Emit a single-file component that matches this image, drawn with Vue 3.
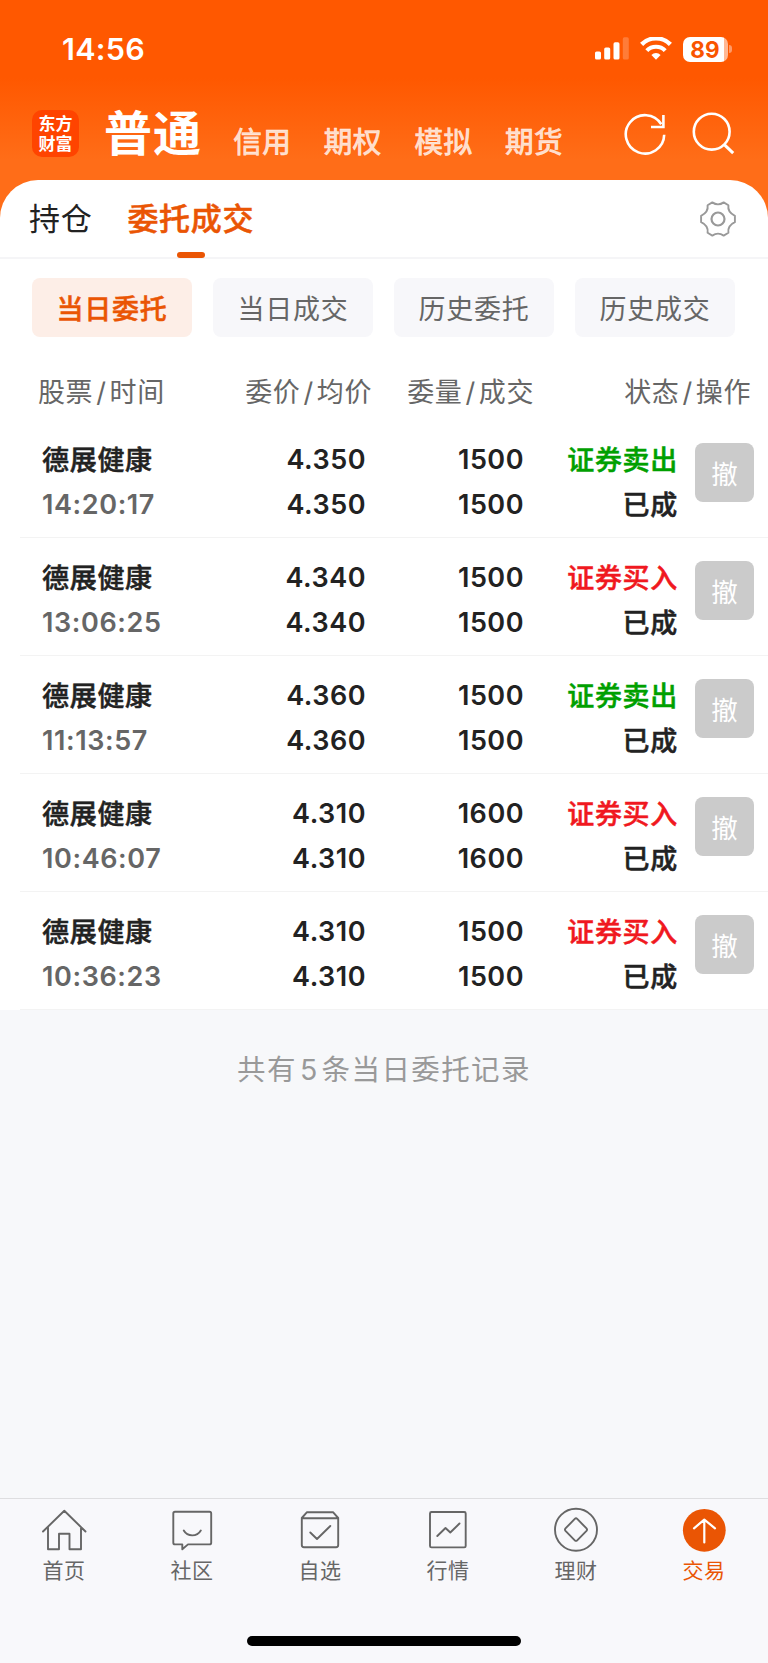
<template>
  <div class="trade-page">
    <header class="top">
      <div class="status-bar">
        <span class="clock">14:56</span>
        <div class="indicators">
          <svg class="signal" width="34" height="24" viewBox="0 0 34 24" fill="#fff">
            <rect x="0" y="14.5" width="6" height="8" rx="1.6" />
            <rect x="9.2" y="10.5" width="6" height="12" rx="1.6" />
            <rect x="18.5" y="5.3" width="6" height="17.2" rx="1.6" />
            <rect x="27.8" y="0.3" width="6" height="22.2" rx="1.6" opacity="0.22" />
          </svg>
          <svg class="wifi" width="32" height="24" viewBox="0 0 32 24" fill="none" stroke="#fff">
            <path d="M1.6 7.4A20.3 20.3 0 0 1 30.4 7.4" stroke-width="4.4" />
            <path d="M6.8 13.6A12.9 12.900 0 0 1 25.2 13.6" stroke-width="4.2" />
            <path d="M16 22.800L11.400 18A6.500 6.500 0 0 1 20.600 18Z" fill="#fff" stroke="none" />
          </svg>
          <div class="battery"><span>89</span></div>
          <i class="battery-cap"></i>
        </div>
      </div>
      <div class="account-bar">
        <div class="logo"><span>东方</span><span>财富</span></div>
        <strong class="account-current">普通</strong>
        <nav class="accounts">
          <span v-for="name in accounts" :key="name">{{ name }}</span>
        </nav>
        <svg class="refresh" width="44" height="44" viewBox="0 0 44 44" fill="none" stroke="#fff" stroke-width="2.6">
          <path d="M41.2 22.800A19.200 19.200 0 1 1 38.300 12.200" />
          <path d="M40.400 3V15H28" />
        </svg>
        <svg class="search" width="44" height="44" viewBox="0 0 44 44" fill="none" stroke="#fff" stroke-width="2.6">
          <circle cx="19.700" cy="19.700" r="17.900" />
          <path d="M32 32.300L41.200 41.200" stroke-width="3" />
        </svg>
      </div>
    </header>

    <main class="panel">
      <div class="tabs">
        <span class="tab">持仓</span>
        <span class="tab active">委托成交</span>
        <svg class="gear" width="40" height="40" viewBox="0 0 40 40" fill="none" stroke="#999" stroke-width="1.9" stroke-linejoin="round">
          <path d="M14.300 3.400L9.600 6.200C10.300 11 7.400 14.800 3.100 16.800V23.200C7.400 25.200 10.300 29 9.600 33.800L14.300 36.600C18 34 22 34 25.700 36.600L30.400 33.800C29.700 29 32.600 25.200 36.900 23.200V16.800C32.600 14.800 29.700 11 30.400 6.200L25.700 3.400C22 6 18 6 14.300 3.400Z" />
          <circle cx="20" cy="20" r="6.500" stroke-width="2.200" />
        </svg>
      </div>

      <div class="chips">
        <button v-for="(chip, i) in chips" :key="chip" class="chip" :class="{ active: i === 0 }" type="button">
          {{ chip }}
        </button>
      </div>

      <div class="row head">
        <span>股票<i>/</i>时间</span>
        <span>委价<i>/</i>均价</span>
        <span>委量<i>/</i>成交</span>
        <span>状态<i>/</i>操作</span>
      </div>

      <div v-for="order in orders" :key="order.time" class="row order">
        <div class="cell">
          <b class="cjk">德展健康</b>
          <span class="time">{{ order.time }}</span>
        </div>
        <div class="cell num">
          <b>{{ order.price }}</b>
          <b>{{ order.price }}</b>
        </div>
        <div class="cell num">
          <b>{{ order.qty }}</b>
          <b>{{ order.qty }}</b>
        </div>
        <div class="cell state">
          <b class="cjk" :class="order.side">{{ order.side === 'sell' ? '证券卖出' : '证券买入' }}</b>
          <b class="cjk">已成</b>
        </div>
        <button class="cancel" type="button">撤</button>
      </div>
    </main>

    <p class="summary">共有<i>5</i>条当日委托记录</p>

    <footer class="tabbar">
      <div class="tabbar-items">
        <div v-for="item in navItems" :key="item.label" class="nav-item" :class="{ active: item.active }">
          <svg width="48" height="48" viewBox="0 0 48 48" fill="none" stroke="#666" stroke-width="1.9" stroke-linecap="round" stroke-linejoin="round">
            <circle v-if="item.active" cx="24.300" cy="24.300" r="21.400" fill="#ea5504" stroke="none" />
            <circle v-if="item.ring" cx="24" cy="23.800" r="21" />
            <path :d="item.icon" :class="{ arrow: item.active }" />
          </svg>
          <span>{{ item.label }}</span>
        </div>
      </div>
      <div class="home-indicator"></div>
    </footer>
  </div>
</template>

<script setup>
const accounts = ['信用', '期权', '模拟', '期货']
const chips = ['当日委托', '当日成交', '历史委托', '历史成交']

const orders = [
  { time: '14:20:17', price: '4.350', qty: '1500', side: 'sell' },
  { time: '13:06:25', price: '4.340', qty: '1500', side: 'buy' },
  { time: '11:13:57', price: '4.360', qty: '1500', side: 'sell' },
  { time: '10:46:07', price: '4.310', qty: '1600', side: 'buy' },
  { time: '10:36:23', price: '4.310', qty: '1500', side: 'buy' }
]

const navItems = [
  { label: '首页', icon: 'M3 25.5L24.3 4.8L45.5 25.5M8 21V43.300H19V27.800H29.500V43.300H41V21' },
  { label: '社区', icon: 'M7 5.7H41.5Q43.2 5.700 43.200 7.400V36.700Q43.200 38.400 41.500 38.400H20L14.300 43.300V38.400H7Q5.300 38.400 5.300 36.700V7.400Q5.300 5.700 7 5.700ZM15.800 24.500C19.500 31 29 31 32.800 24.500' },
  { label: '自选', icon: 'M11 6.2H37L42.2 12V39Q42.200 41.200 40 41.200H8Q5.800 41.200 5.800 39V12L11 6.200ZM6 12.300H42M14.300 26.500L21 33L34.300 20' },
  { label: '行情', icon: 'M7.5 6H40.3Q41.7 6 41.700 7.400V40Q41.700 41.400 40.300 41.400H7.500Q6 41.400 6 40V7.400Q6 6 7.500 6ZM13.300 30L21.500 22L26.300 26.500L35.500 17.500' },
  { label: '理财', ring: true, icon: 'M22.8 12.9Q24 11.7 25.2 12.900L34.500 22.400Q35.600 23.600 34.500 24.800L25.200 34.300Q24 35.500 22.800 34.300L13.500 24.800Q12.400 23.600 13.500 22.400Z' },
  { label: '交易', active: true, icon: 'M24.3 36.5V14M14 22.3L24.3 13.6L35 22.3' }
]
</script>

<style>
body {
  background: #f7f8fa;
}
</style>

<style scoped>
.trade-page {
  display: flex;
  flex-direction: column;
  width: 768px;
  height: 1663px;
  overflow: hidden;
  background: #f7f8fa;
  color: #222;
  font-family: Inter, 'Noto Sans CJK SC', sans-serif;
}

.top {
  flex: none;
  height: 222px;
  background: linear-gradient(180deg, #ff5800 0, #ff5800 78px, #ff6d18 160px, #ff6d18 100%);
}

.status-bar {
  display: flex;
  justify-content: space-between;
  align-items: center;
  height: 98px;
  padding: 0 36px 0 62px;
  box-sizing: border-box;
}

.clock {
  font-size: 30.5px;
  font-weight: 600;
  line-height: 36px;
  letter-spacing: 0.3px;
  color: #fff;
}

.indicators {
  display: flex;
  align-items: center;
}

.wifi {
  margin-left: 11px;
}

.battery {
  width: 45px;
  height: 25px;
  margin-left: 11px;
  border-radius: 7px;
  background: linear-gradient(90deg, #fff 41px, #ffb894 41px);
  color: #f95500;
  font-size: 22.5px;
  font-weight: 700;
  line-height: 25px;
  text-align: center;
}

.battery span {
  margin-right: 1px;
}

.battery-cap {
  width: 3px;
  height: 8px;
  margin-left: 1px;
  border-radius: 0 4px 4px 0;
  background: #ff9a68;
}

.account-bar {
  display: flex;
  height: 82px;
  padding-left: 32px;
}

.logo {
  display: flex;
  flex-direction: column;
  justify-content: center;
  width: 47px;
  height: 47px;
  margin-top: 12px;
  padding-bottom: 2px;
  border-radius: 10px;
  background: #ff4400;
  color: #fff;
  font-family: 'Noto Sans CJK SC', sans-serif;
  font-size: 17px;
  font-weight: 700;
  line-height: 20px;
  text-align: center;
  box-sizing: border-box;
}

.account-current {
  width: 98px;
  margin: 6px 0 0 25px;
  color: #fff;
  font-size: 48px;
  font-weight: 700;
  line-height: 60px;
  letter-spacing: 1px;
}

.accounts {
  display: flex;
  width: 390px;
  margin: 23px 0 0 31px;
  color: rgba(255, 255, 255, 0.8);
  font-size: 29px;
  font-weight: 500;
  line-height: 43px;
  -webkit-text-stroke: 0.3px;
}

.accounts span {
  width: 90.6px;
}

.refresh,
.search {
  flex: none;
  margin-top: 14px;
}

.search {
  margin-left: 25px;
}

.panel {
  flex: none;
  height: 830px;
  margin-top: -42px;
  border-radius: 38px 38px 0 0;
  background: #fff;
}

.tabs {
  display: flex;
  height: 79px;
  padding: 0 29px;
  border-bottom: 2px solid #f5f5f7;
  box-sizing: border-box;
}

.tab {
  position: relative;
  height: 79px;
  margin-right: 35px;
  font-size: 31px;
  line-height: 77px;
  letter-spacing: 0.7px;
}

.tab.active {
  color: #ea5504;
  font-weight: 500;
  -webkit-text-stroke: 0.5px;
}

.tab.active::after {
  position: absolute;
  bottom: 1px;
  left: 50%;
  width: 28px;
  height: 6px;
  margin-left: -14px;
  border-radius: 3px;
  background: #ea5504;
  content: '';
}

.gear {
  margin: 19px 1px 0 auto;
}

.chips {
  display: flex;
  gap: 21px;
  padding: 19px 33px 0 32px;
}

.chip {
  flex: 1;
  height: 59px;
  padding: 0;
  border: 0;
  border-radius: 8px;
  background: #f7f7fa;
  color: #666;
  font: 400 27px/57px 'Noto Sans CJK SC', sans-serif;
  letter-spacing: 0.7px;
}

.chip.active {
  background: #fdeee7;
  color: #ea5504;
  font-weight: 500;
  -webkit-text-stroke: 0.5px;
}

.row {
  display: grid;
  grid-template-columns: 180px 144px 158px 154px 79px;
}

.head {
  grid-template-columns: 180px 154px 162px 217px;
  height: 83px;
  padding: 36px 0 0 38px;
  box-sizing: border-box;
  color: #666;
  font-size: 27px;
  line-height: 40px;
  letter-spacing: 0.6px;
}

.head span + span {
  text-align: right;
}

.head i {
  padding: 0 3px;
  font-style: normal;
}

.order {
  height: 118px;
  margin-left: 20px;
  padding-left: 22px;
  border-bottom: 1px solid #f3f3f3;
  box-sizing: border-box;
}

.cell {
  display: flex;
  flex-direction: column;
  padding-top: 17px;
  font-size: 27px;
  line-height: 45px;
  letter-spacing: 0.5px;
  white-space: nowrap;
}

.cell b {
  font-weight: 600;
}

.cell .cjk {
  margin-top: -1px;
  margin-bottom: 1px;
  font-family: 'Noto Sans CJK SC', sans-serif;
  font-weight: 500;
  letter-spacing: 0.7px;
  -webkit-text-stroke: 0.5px;
}

.time {
  color: #666;
  font-weight: 600;
  letter-spacing: 0.6px;
}

.num,
.state {
  text-align: right;
}

.cell .sell {
  color: #00a000;
}

.cell .buy {
  color: #f01820;
}

.cancel {
  width: 59px;
  height: 59px;
  margin: 23px 0 0 17px;
  padding: 0;
  border: 0;
  border-radius: 8px;
  background: #cbcbcb;
  color: #fff;
  font: 400 26.5px/57px 'Noto Sans CJK SC', sans-serif;
}

.summary {
  margin: 39px 0 0;
  color: #999;
  font-size: 28.5px;
  line-height: 42px;
  letter-spacing: 1.4px;
  text-align: center;
}

.summary i {
  padding: 0 3px;
  font-style: normal;
}

.tabbar {
  display: flex;
  flex-direction: column;
  justify-content: space-between;
  align-items: center;
  height: 165px;
  margin-top: auto;
  padding-bottom: 17px;
  border-top: 1px solid #dedee0;
  background: #f8f8fb;
  box-sizing: border-box;
}

.tabbar-items {
  display: flex;
}

.nav-item {
  display: flex;
  flex-direction: column;
  align-items: center;
  width: 128px;
  padding-top: 7px;
  color: #666;
  font-size: 21px;
  line-height: 34px;
  letter-spacing: 0.6px;
}

.nav-item.active {
  color: #ea5504;
}

.arrow {
  stroke: #fff;
  stroke-width: 2.2;
}

.home-indicator {
  width: 274px;
  height: 10px;
  border-radius: 5px;
  background: #000;
}
</style>
